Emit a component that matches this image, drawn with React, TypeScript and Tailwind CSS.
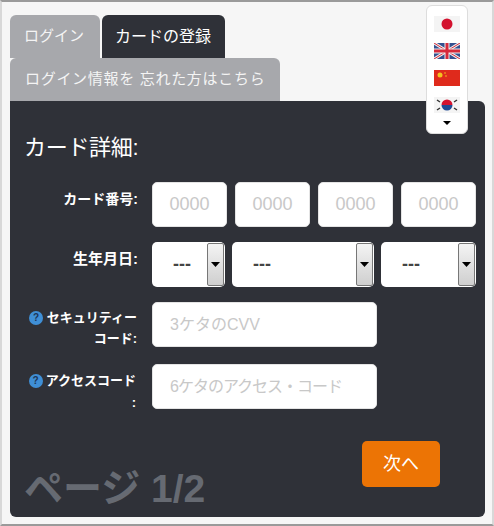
import React from 'react';

const font = "font-['Liberation_Sans','Noto_Sans_CJK_JP',sans-serif]";

function CardInput() {
  return (
    <input
      placeholder="0000"
      className="w-[75px] h-[45px] rounded-[5px] bg-white text-center text-[18px] text-black placeholder:text-[#c8c8c8] border border-[#e4e4e4] outline-none"
    />
  );
}

function DateSelect({ width, textPad }: { width: string; textPad: string }) {
  return (
    <div className={`${width} h-[45px] rounded-[5px] bg-white flex items-center justify-between pr-px`}>
      <span className={`${textPad} text-[18px] font-bold text-[#444]`}>---</span>
      <span className="w-[17px] h-[43px] flex items-center justify-center rounded-[2px] border border-[#777] bg-gradient-to-b from-[#f4f4f4] to-[#cfcfcf]">
        <svg width="9" height="5" viewBox="0 0 9 5"><path d="M0 0h9L4.5 5z" fill="#000" /></svg>
      </span>
    </div>
  );
}

function HelpIcon() {
  return (
    <span className="inline-flex w-[14px] h-[14px] rounded-full bg-[#3f8fd6] text-[#1d3557] text-[10px] font-bold items-center justify-center align-[1px] leading-none">?</span>
  );
}

function Flag({ children }: { children: React.ReactNode }) {
  return (
    <svg width="26" height="16" viewBox="0 0 26 16" className="block">{children}</svg>
  );
}

export default function App() {
  return (
    <div className={`${font} w-[494px] h-[526px] bg-[#f6f6f6] border-t-2 border-b-2 border-l-2 border-r-2 border-t-[#9a9a9a] border-b-[#9a9a9a] border-l-[#d8d8d8] border-r-[#d8d8d8] relative overflow-hidden`}>
      <div className="pl-2 pt-[13px] pr-[7px]">
        <div className="flex gap-[2px]">
          <div className="w-[90px] h-[43px] pl-[14px] rounded-t-[6px] bg-[#a7a8ac] text-[#f4f4f4] text-[15px] flex items-center">ログイン</div>
          <div className="w-[123px] h-[43px] pl-[13px] rounded-t-[6px] bg-[#2f3138] text-white text-[16px] flex items-center">カードの登録</div>
        </div>
        <div className="w-[270px] h-[43px] pl-[15px] rounded-t-[6px] bg-[#a7a8ac] text-[#f4f4f4] text-[15px] tracking-[0.7px] flex items-center">ログイン情報を 忘れた方はこちら</div>

        <div className="h-[416px] bg-[#2f3138] rounded-b-[6px] rounded-tr-[6px] flex flex-col">
          <h2 className="mt-[33px] ml-[14px] h-[28px] text-[22px] leading-[28px] text-white font-normal tracking-[-0.3px]">カード詳細:</h2>

          <div className="mt-5 flex">
            <label className="w-[128px] pt-[7px] text-right text-white text-[14px] font-bold leading-[20px]">カード番号:</label>
            <div className="ml-[14px] flex gap-2">
              <CardInput />
              <CardInput />
              <CardInput />
              <CardInput />
            </div>
          </div>

          <div className="mt-[15px] flex">
            <label className="w-[128px] pt-[7px] text-right text-white text-[15px] font-bold leading-[20px]">生年月日:</label>
            <div className="ml-[14px] flex gap-[7px]">
              <DateSelect width="w-[73px]" textPad="pl-[21px]" />
              <DateSelect width="w-[142px]" textPad="pl-[21px]" />
              <DateSelect width="w-[95px]" textPad="pl-[21px]" />
            </div>
          </div>

          <div className="mt-[15px] flex h-[45px]">
            <label className="w-[128px] pt-[5px] pr-px text-right text-white text-[13px] font-bold leading-[21px]">
              <HelpIcon /> セキュリティー<br />コード:
            </label>
            <input
              placeholder="3ケタのCVV"
              className="ml-[14px] w-[225px] h-[45px] px-[17px] rounded-[5px] bg-white text-[16px] placeholder:text-[#c8c8c8] border border-[#e4e4e4] outline-none"
            />
          </div>

          <div className="mt-[17px] flex h-[45px]">
            <label className="w-[128px] pt-[6px] pr-[2px] text-right text-white text-[13px] font-bold leading-[22px]">
              <HelpIcon /><span className="ml-[3px]">アクセスコード</span><br />:
            </label>
            <input
              placeholder="6ケタのアクセス・コード"
              className="ml-[14px] w-[225px] h-[45px] px-[17px] rounded-[5px] bg-white text-[16px] tracking-[-1px] placeholder:text-[#c8c8c8] border border-[#e4e4e4] outline-none"
            />
          </div>

          <div className="mt-auto flex items-end justify-between pl-[14px] pr-[45px] pb-[7px]">
            <span className="text-[39px] leading-[42px] font-bold text-[#666a72]">ページ 1/2</span>
            <button className="w-[78px] h-[46px] mb-[23px] rounded-[5px] bg-[#ec7405] text-white text-[18px]">次へ</button>
          </div>
        </div>
      </div>

      {/* language picker sits over the panel */}
      <div className="absolute left-[424px] top-[3px] w-[42px] h-[129px] bg-white rounded-[6px] border border-[#ddd] flex flex-col items-center pt-[10px] gap-[11px]">
        <Flag>
          <rect width="26" height="16" fill="#f4f4f4" />
          <circle cx="13" cy="8" r="5.5" fill="#d3122f" />
        </Flag>
        <Flag>
          <rect width="26" height="16" fill="#34508f" />
          <path d="M0 0L26 16M26 0L0 16" stroke="#eee" strokeWidth="3" />
          <path d="M0 0L26 16M26 0L0 16" stroke="#d6293a" strokeWidth="1" />
          <path d="M13 0V16M0 8H26" stroke="#eee" strokeWidth="5" />
          <path d="M13 0V16M0 8H26" stroke="#d6293a" strokeWidth="3" />
        </Flag>
        <Flag>
          <rect width="26" height="16" fill="#df2a1c" />
          <circle cx="6" cy="5" r="2.5" fill="#f3c21f" />
          <circle cx="11" cy="3" r="0.8" fill="#f3c21f" />
          <circle cx="12" cy="6" r="0.8" fill="#f3c21f" />
        </Flag>
        <Flag>
          <rect width="26" height="16" fill="#f4f4f4" />
          <path d="M7.5 8a5.5 5.5 0 0 1 11 0z" fill="#d3122f" />
          <path d="M7.5 8a5.5 5.5 0 0 0 11 0z" fill="#1f4a94" />
          <path d="M3 3l3 2M20 5l3-2M3 13l3-2M20 11l3 2" stroke="#333" strokeWidth="1.5" />
        </Flag>
        <svg width="8" height="4" viewBox="0 0 8 4" className="-mt-[3px]"><path d="M0 0h8L4 4z" fill="#000" /></svg>
      </div>
    </div>
  );
}
